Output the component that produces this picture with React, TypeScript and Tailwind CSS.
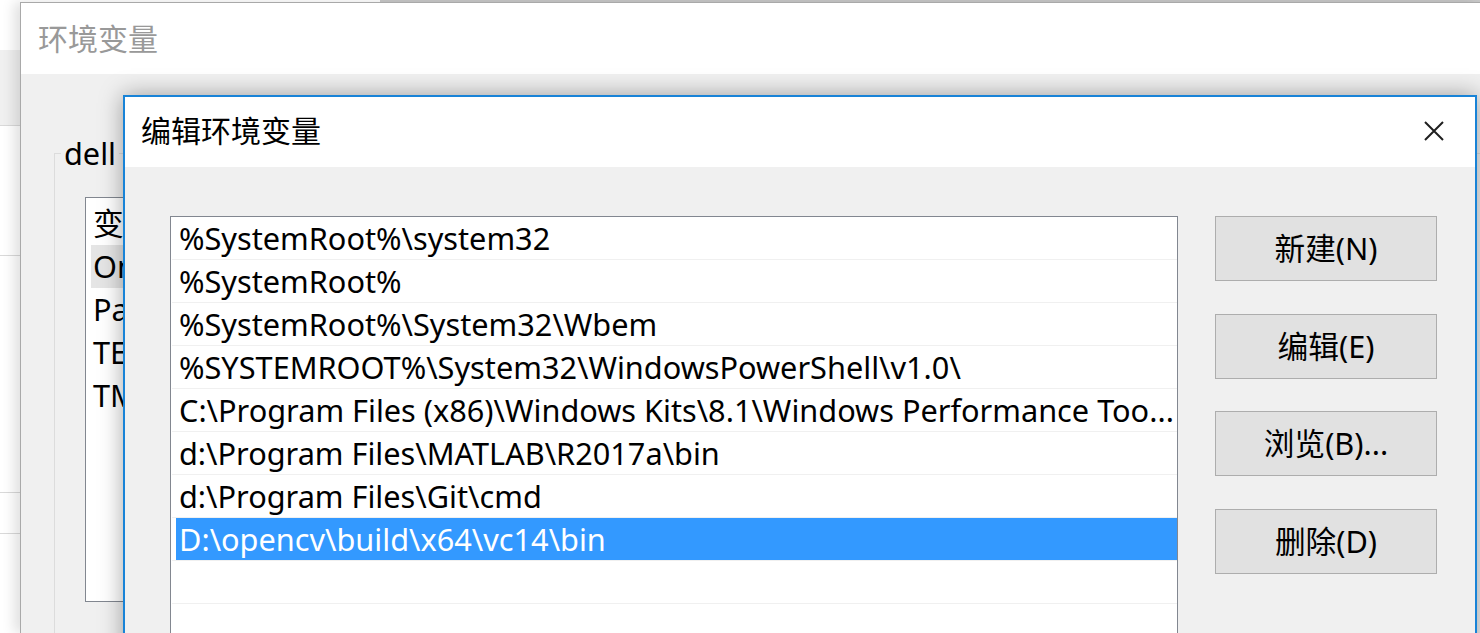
import { useState } from "react";

const paths = [
  "%SystemRoot%\\system32",
  "%SystemRoot%",
  "%SystemRoot%\\System32\\Wbem",
  "%SYSTEMROOT%\\System32\\WindowsPowerShell\\v1.0\\",
  "C:\\Program Files (x86)\\Windows Kits\\8.1\\Windows Performance Too...",
  "d:\\Program Files\\MATLAB\\R2017a\\bin",
  "d:\\Program Files\\Git\\cmd",
  "D:\\opencv\\build\\x64\\vc14\\bin",
  "",
  "",
];

const userVars = ["变量", "OneDrive", "Path", "TEMP", "TMP"];

const font = {
  fontFamily: '"Noto Sans", "Noto Sans CJK SC", sans-serif',
};

export default function App() {
  const [selected, setSelected] = useState(7);

  return (
    <div
      className="relative h-[633px] w-[1480px] overflow-hidden bg-white text-[30.7px] text-black"
      style={font}
    >
      {/* desktop behind the windows */}
      <div className="absolute left-0 top-[50px] flex w-[20px] flex-col">
        <div className="h-[76px] border-b border-[#d9d9d9] bg-[#f0f0f0]" />
        <div className="h-[130px] border-b border-[#d9d9d9]" />
        <div className="h-[237px] border-b border-[#d9d9d9]" />
        <div className="h-[41px] border-b border-[#d9d9d9]" />
      </div>
      <div className="absolute left-[380px] top-0 h-[2px] w-[1100px] bg-[#c8c8c8]" />

      {/* outer window: 环境变量 */}
      <div className="absolute bottom-0 left-[20px] right-0 top-[2px] flex flex-col border-l border-t border-[#a9a9a9] shadow-[-6px_0_12px_rgba(0,0,0,0.12)]">
        <div className="flex h-[71px] shrink-0 items-center bg-white pl-[17px] text-[30px] text-[#999999]">
          环境变量
        </div>
        <div className="flex-1 bg-[#f0f0f0] pl-[33px] pt-[79px]">
          <div className="relative h-[600px] border-l border-t border-[#dcdcdc]">
            <span className="absolute -top-[21px] left-[6px] bg-[#f0f0f0] px-[3px] leading-[40px]">
              dell
            </span>
            <div className="ml-[30px] mt-[43px] h-[405px] w-[60px] overflow-hidden border border-[#828790] bg-white pt-[4px]">
              {userVars.map((name, i) => (
                <div
                  key={name}
                  className={`ml-[5px] flex h-[43px] items-center overflow-hidden whitespace-nowrap pl-[2px] leading-none ${
                    i === 1 ? "bg-[#e5e5e5]" : ""
                  }`}
                >
                  {name}
                </div>
              ))}
            </div>
          </div>
        </div>
      </div>

      {/* edit dialog: 编辑环境变量 */}
      <div className="absolute left-[123px] top-[95px] flex h-[560px] w-[1354px] flex-col border-2 border-[#1883d7] bg-[#f0f0f0] shadow-[0_0_22px_rgba(0,0,0,0.35)]">
        <div className="flex h-[70px] shrink-0 items-center justify-between bg-white pb-[3px] pl-[16px] pr-[31px]">
          <span className="text-[30px]">编辑环境变量</span>
          <svg width="20" height="20" viewBox="0 0 20 20" className="text-[#1f1f1f]">
            <path d="M1 1 L19 19 M19 1 L1 19" stroke="currentColor" strokeWidth="2" />
          </svg>
        </div>

        <div className="flex min-h-0 flex-1 pl-[45px] pt-[49px]">
          <div className="h-[500px] w-[1008px] shrink-0 border border-[#828790] bg-white">
            {paths.map((p, i) => (
              <div
                key={i}
                onClick={() => setSelected(i)}
                className="ml-px h-[43px] border-b border-[#f0f0f0]"
              >
                <div
                  className={`ml-[4px] flex h-[42px] items-center overflow-hidden whitespace-nowrap pl-[3px] leading-none ${
                    selected === i ? "bg-[#3399ff] text-white" : ""
                  }`}
                >
                  {p}
                </div>
              </div>
            ))}
          </div>

          <div className="ml-[37px] flex flex-col gap-[32.5px]">
            {["新建(N)", "编辑(E)", "浏览(B)...", "删除(D)"].map((label) => (
              <button
                key={label}
                className="h-[65px] w-[222px] border border-[#adadad] bg-[#e1e1e1] text-[30.7px]"
              >
                {label}
              </button>
            ))}
          </div>
        </div>
      </div>
    </div>
  );
}
